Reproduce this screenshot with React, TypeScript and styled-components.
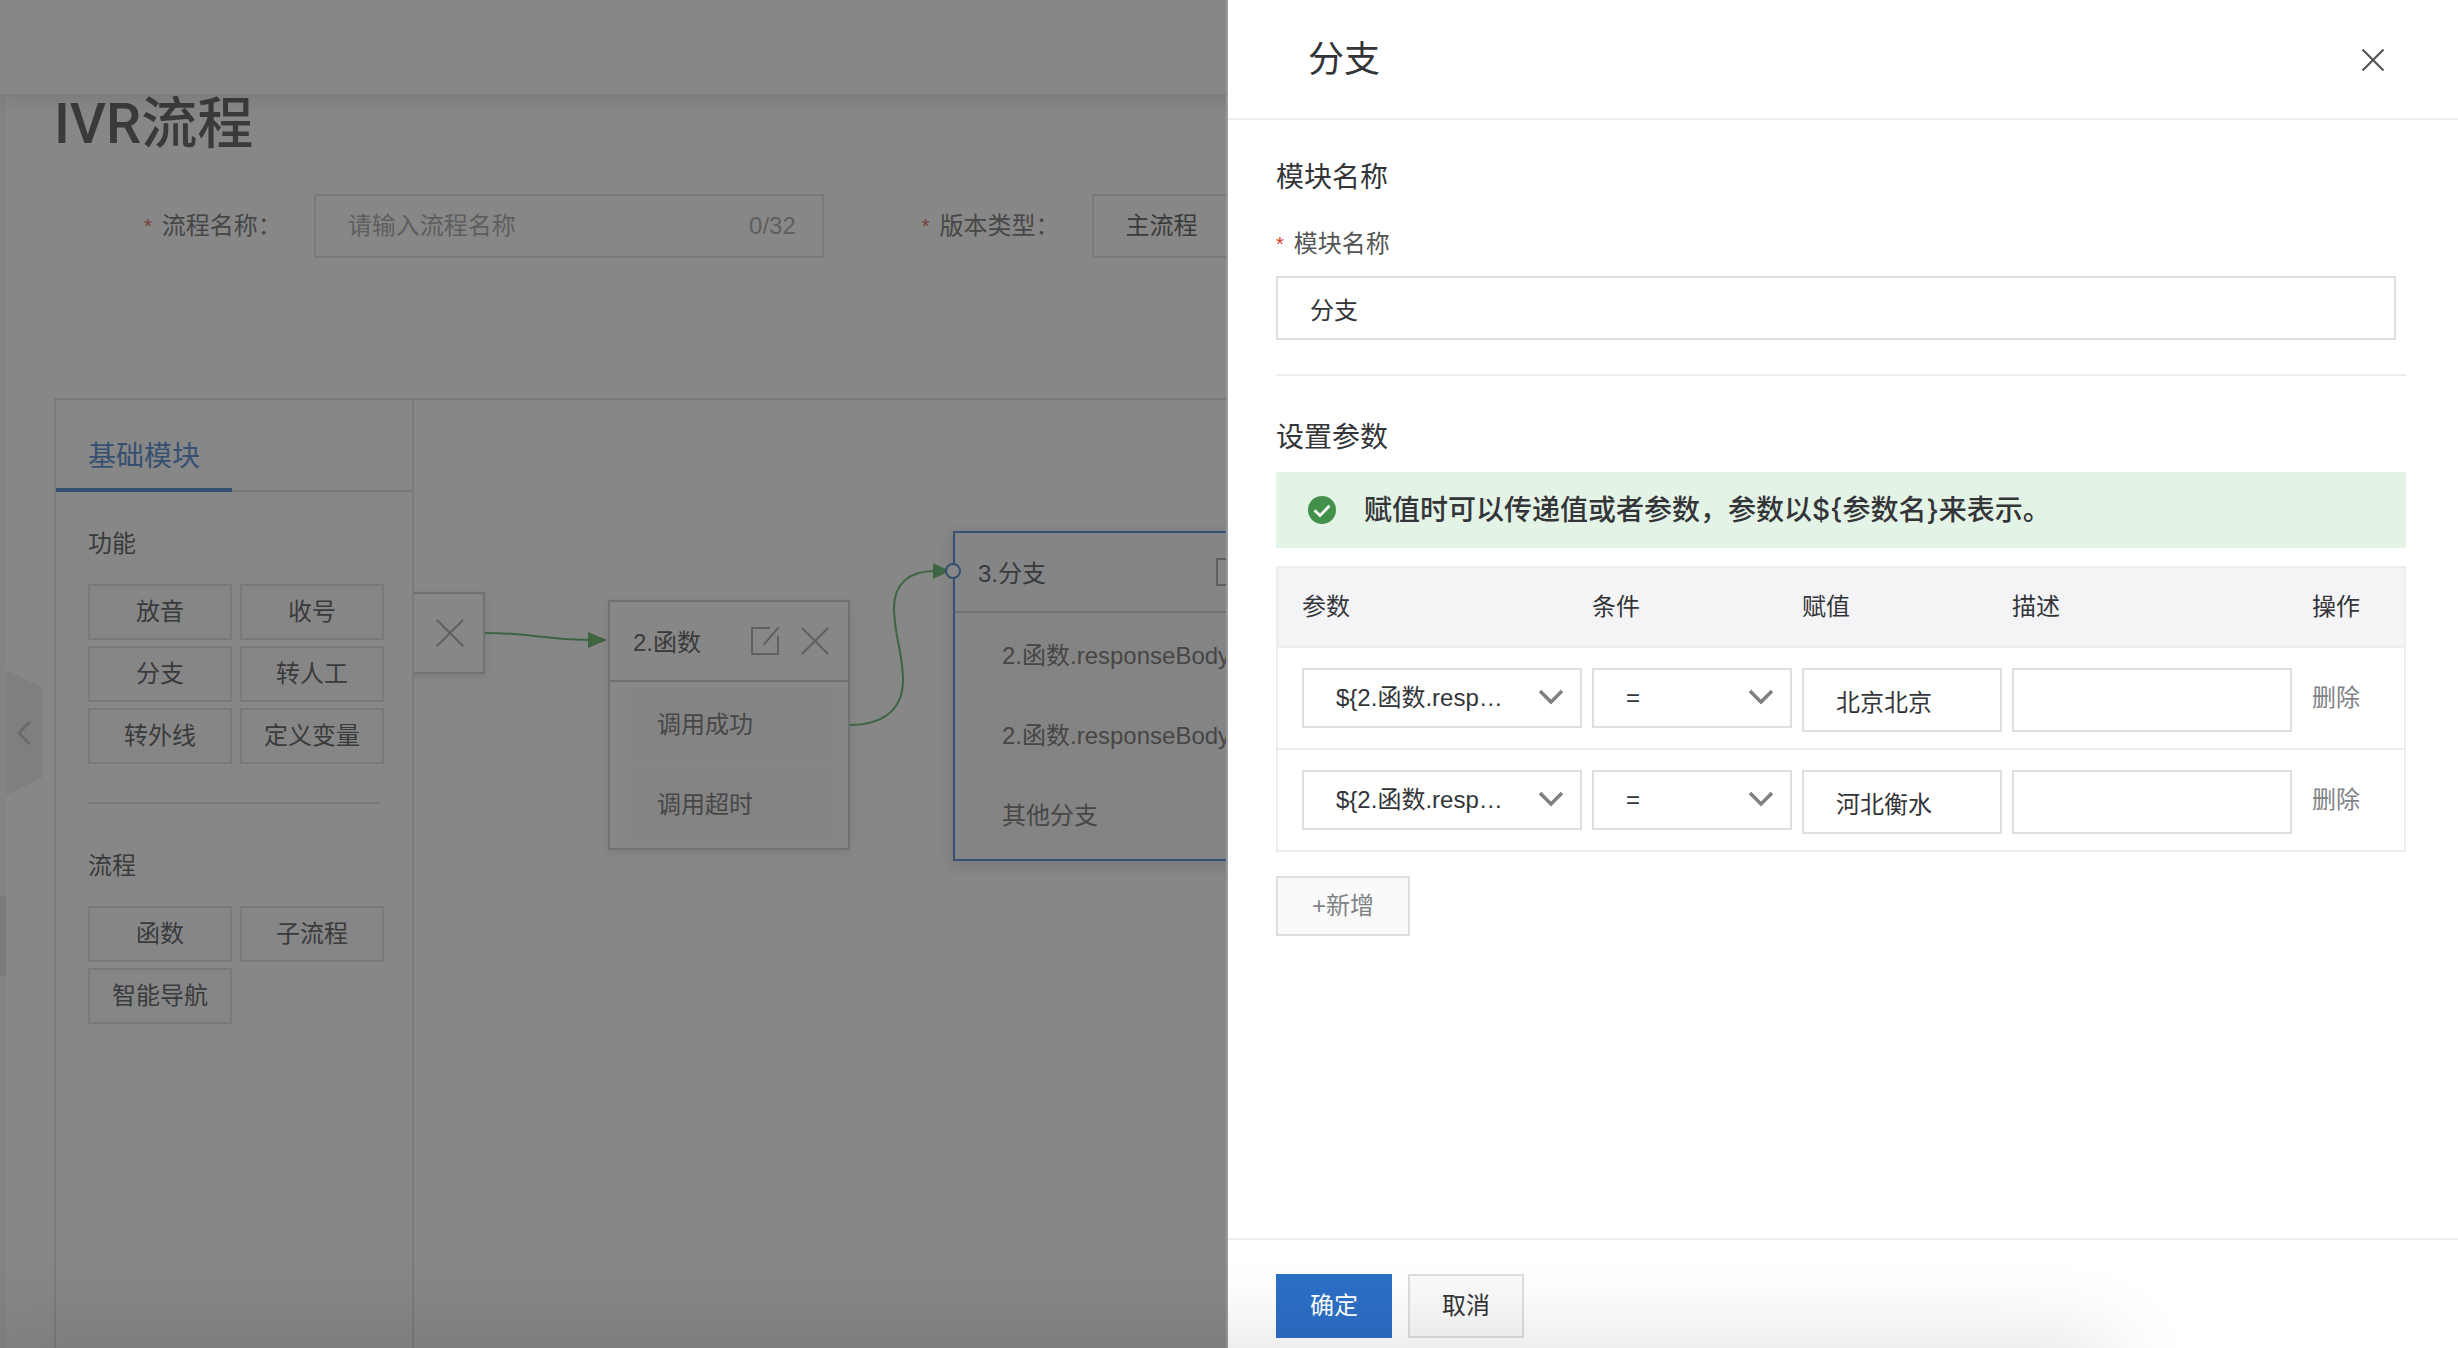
import React, { useState } from "react";
import styled, { createGlobalStyle, css } from "styled-components";

const color = {
  text: "#333538",
  body: "#555555",
  muted: "#808285",
  faint: "#949494",
  line: "#dedede",
  divider: "#ededed",
  blue: "#2c6fc7",
  red: "#d93a2b",
  green: "#3fa34a",
};

const GlobalStyle = createGlobalStyle`
  *, *::before, *::after { box-sizing: border-box; }
  body {
    margin: 0;
    background: #fff;
    overflow: hidden;
  }
  body, button, input, select {
    font-family: "Liberation Sans", "Noto Sans CJK SC", sans-serif;
    font-size: 24px;
    line-height: 32px;
    color: ${color.text};
  }
  h1, h2, h3, p { margin: 0; font-weight: 400; }
`;

/* ---------- shared controls ---------- */

const controlBox = css`
  border: 2px solid ${color.line};
  border-radius: 0;
  background: #fff;
  outline: none;
`;

const TextInput = styled.input`
  ${controlBox}
  display: block;
  width: 100%;
  height: 64px;
  padding: 0 32px;
`;

const SelectWrap = styled.div`
  position: relative;
`;

const SelectBox = styled.select<{ $height?: number }>`
  ${controlBox}
  appearance: none;
  display: block;
  width: 100%;
  height: ${(p) => p.$height ?? 60}px;
  padding: 0 32px;
`;

const SelectArrow = styled.svg`
  position: absolute;
  right: 18px;
  top: 50%;
  width: 26px;
  height: 16px;
  margin-top: -9px;
  pointer-events: none;
`;

const Button = styled.button<{ $primary?: boolean }>`
  height: 64px;
  padding: 0 32px;
  border: 2px solid ${(p) => (p.$primary ? color.blue : color.line)};
  background: ${(p) => (p.$primary ? color.blue : "#fafafa")};
  color: ${(p) => (p.$primary ? "#fff" : color.text)};
  cursor: pointer;
`;

const AddButton = styled(Button)`
  align-self: flex-start;
  height: 60px;
  margin-top: 24px;
  padding: 0 34px;
  color: ${color.muted};
`;

const IconButton = styled.button`
  display: flex;
  padding: 0;
  border: 0;
  background: none;
  cursor: pointer;
`;

const Label = styled.label`
  display: flex;
  gap: 10px;
  color: ${color.body};
  white-space: nowrap;
`;

const Star = styled.span`
  color: ${color.red};
  font-size: 20px;
`;

/* ---------- page behind the drawer ---------- */

const Page = styled.div`
  display: flex;
  flex-direction: column;
  height: 100vh;
  overflow: hidden;
`;

const TopBar = styled.header`
  position: relative;
  z-index: 1;
  flex: none;
  height: 96px;
  background: #fff;
  border-bottom: 2px solid #e2e2e2;
  box-shadow: 0 4px 20px rgba(0, 0, 0, 0.14);
`;

const Shell = styled.div`
  flex: 1;
  display: flex;
  min-height: 0;
`;

const Rail = styled.div`
  flex: none;
  width: 6px;
  padding-top: 800px;
  background: #f4f4f4;
`;

const RailThumb = styled.div`
  height: 80px;
  background: #dedede;
`;

const Gutter = styled.div`
  flex: none;
  width: 48px;
  padding-top: 574px;
`;

const Main = styled.main`
  flex: 1;
  display: flex;
  flex-direction: column;
  min-width: 0;
`;

const PageTitle = styled.h1`
  font-family: Roboto, "Noto Sans CJK SC", sans-serif;
  font-size: 56px;
  font-weight: 500;
  line-height: 56px;
`;

const FlowForm = styled.form`
  display: flex;
  align-items: center;
  margin: 42px 0 140px;
  padding-left: 90px;
`;

const Field = styled.div`
  flex: none;
  display: flex;
  align-items: center;
  gap: 32px;
  margin-right: 98px;
`;

const CountedInput = styled.div`
  ${controlBox}
  display: flex;
  align-items: center;
  width: 510px;
  height: 64px;
  padding: 0 26px 0 32px;
  color: ${color.faint};
`;

const BareInput = styled.input`
  flex: 1;
  min-width: 0;
  padding: 0;
  border: 0;
  outline: none;
  background: none;
  &::placeholder {
    color: ${color.faint};
    opacity: 1;
  }
`;

const VersionSelect = styled(SelectWrap)`
  width: 510px;
`;

const Workbench = styled.section`
  flex: 1;
  display: flex;
  min-height: 0;
  border: 2px solid ${color.line};
  border-right: 0;
  border-bottom: 0;
`;

const Palette = styled.aside`
  flex: none;
  width: 358px;
  border-right: 2px solid ${color.line};
`;

const TabBar = styled.div`
  display: flex;
  height: 92px;
  box-shadow: inset 0 -2px 0 #d6d6d6;
`;

const Tab = styled.button`
  padding: 26px 32px 0;
  border: 0;
  border-bottom: 4px solid ${color.blue};
  background: none;
  color: ${color.blue};
  font-size: 28px;
  cursor: pointer;
`;

const GroupRule = styled.hr`
  height: 2px;
  margin: 38px 32px 0;
  border: 0;
  background: #dcdcdc;
`;

const Group = styled.section`
  padding: 36px 28px 0 32px;
  ${GroupRule} + & {
    padding-top: 46px;
  }
`;

const GroupTitle = styled.h3`
  font-size: 24px;
  line-height: 32px;
`;

const Modules = styled.div`
  display: grid;
  grid-template-columns: 144px 144px;
  gap: 6px 8px;
  margin-top: 24px;
`;

const ModuleButton = styled.button`
  height: 56px;
  padding: 0;
  border: 2px solid ${color.line};
  background: #fcfcfc;
  cursor: pointer;
`;

/* ---------- flow canvas ---------- */

const Canvas = styled.div`
  position: relative;
  flex: 1;
  overflow: hidden;
`;

const Edges = styled.svg`
  position: absolute;
  inset: 0;
  width: 100%;
  height: 100%;
  pointer-events: none;
`;

const Node = styled.article<{ $x: number; $y: number; $w: number; $active?: boolean }>`
  position: absolute;
  left: ${(p) => p.$x}px;
  top: ${(p) => p.$y}px;
  width: ${(p) => p.$w}px;
  border: 2px solid ${(p) => (p.$active ? color.blue : "#c2c4cb")};
  background: ${(p) => (p.$active ? "#f7f9fe" : "#fff")};
  box-shadow: ${(p) => (p.$active ? "0 4px 12px 4px rgba(60, 80, 120, 0.16)" : "0 2px 8px rgba(60, 80, 120, 0.2)")};
`;

const NodeHead = styled.div<{ $plain?: boolean }>`
  display: flex;
  align-items: center;
  gap: 22px;
  height: ${(p) => (p.$plain ? 78 : 80)}px;
  padding: 0 19px 0 23px;
  border-bottom: ${(p) => (p.$plain ? "0" : "2px solid #c2c4c8")};
`;

const NodeTitle = styled.h3`
  flex: 1;
  padding-top: 4px;
  font-size: 24px;
  line-height: 32px;
  white-space: nowrap;
`;

const NodeBody = styled.div`
  display: flex;
  flex-direction: column;
  gap: 8px;
  padding: 7px 15px 7px 23px;
`;

const NodeItem = styled.div`
  height: 72px;
  padding: 20px 24px;
  background: #f6f6f6;
  color: ${color.body};
  white-space: nowrap;
`;

const Port = styled.span`
  position: absolute;
  left: -10px;
  top: 32px;
  width: 16px;
  height: 16px;
  border: 2px solid ${color.blue};
  border-radius: 50%;
  background: #fff;
`;

/* ---------- drawer ---------- */

const Mask = styled.div`
  position: fixed;
  inset: 0;
  z-index: 2;
  background: rgba(62, 62, 62, 0.62);
`;

const Drawer = styled.aside`
  position: fixed;
  top: 0;
  right: 0;
  bottom: 0;
  z-index: 3;
  display: flex;
  flex-direction: column;
  width: calc(50% + 3px);
  background: #fff;
  border-left: 2px solid #999;
`;

const DrawerHead = styled.header`
  flex: none;
  display: flex;
  align-items: center;
  justify-content: space-between;
  height: 120px;
  padding: 2px 74px 0 80px;
  border-bottom: 2px solid ${color.divider};
`;

const DrawerTitle = styled.h2`
  font-size: 36px;
  line-height: 48px;
`;

const DrawerBody = styled.div`
  flex: 1;
  display: flex;
  flex-direction: column;
  min-height: 0;
  padding: 38px 52px 0 48px;
`;

const SectionTitle = styled.h3`
  font-size: 28px;
  line-height: 40px;
`;

const NameField = styled.div`
  display: flex;
  flex-direction: column;
  gap: 16px;
  margin: 30px 0 34px;
  padding-right: 10px;
`;

const SettingsSection = styled.section`
  display: flex;
  flex-direction: column;
  padding-top: 42px;
  border-top: 2px solid ${color.divider};
`;

const Notice = styled.div`
  display: flex;
  align-items: center;
  gap: 28px;
  height: 76px;
  margin: 14px 0 18px;
  padding: 0 32px;
  background: #e3f3e5;
`;

const NoticeText = styled.p`
  font-family: Inter, "Noto Sans CJK SC", sans-serif;
  font-size: 28px;
  font-weight: 500;
  line-height: 40px;
`;

const ParamTable = styled.table`
  width: 100%;
  table-layout: fixed;
  border-spacing: 0;
  border: 2px solid ${color.divider};
  border-bottom: 0;
`;

const Col = styled.col<{ $w?: number }>`
  width: ${(p) => (p.$w ? `${p.$w}px` : "auto")};
`;

const cell = css`
  border-bottom: 2px solid ${color.divider};
  text-align: left;
  font-weight: 400;
  &:first-child { padding-left: 24px; }
  &:last-child { padding-left: 20px; }
`;

const Th = styled.th`
  height: 80px;
  padding: 0 0 0 10px;
  background: #f4f4f7;
  ${cell}
`;

const Td = styled.td`
  height: 102px;
  padding: 20px 0 0 10px;
  vertical-align: top;
  ${cell}
`;

const RemoveButton = styled(IconButton)`
  height: 60px;
  align-items: center;
  color: ${color.muted};
`;

const DrawerFoot = styled.footer`
  flex: none;
  display: flex;
  gap: 16px;
  padding: 34px 48px 10px;
  border-top: 2px solid ${color.divider};
`;

const BottomShade = styled.div`
  position: fixed;
  left: 0;
  bottom: -40px;
  z-index: 4;
  width: 85%;
  height: 20px;
  box-shadow: 0 0 90px 20px rgba(0, 0, 0, 0.16);
  pointer-events: none;
`;

/* ---------- icons ---------- */

const CrossIcon = ({ size, stroke }: { size: number; stroke: string }) => (
  <svg width={size} height={size} viewBox="0 0 28 28" fill="none" stroke={stroke} strokeWidth={size > 24 ? 2 : 2.8}>
    <path d="M0.7 0.7 27.3 27.3M27.3 0.7 0.7 27.3" />
  </svg>
);

const EditIcon = () => (
  <svg width="28" height="28" viewBox="0 0 28 28" fill="none" stroke="#999" strokeWidth="2">
    <path d="M19 1H1v26h26V8.5M27.500 0.500 12.500 18" />
  </svg>
);

const CheckIcon = () => (
  <svg width="28" height="28" viewBox="0 0 28 28">
    <circle cx="14" cy="14" r="14" fill="#43904a" />
    <path d="M6.5 14.2 12 19.600 21.500 9.800" fill="none" stroke="#fff" strokeWidth="2.8" />
  </svg>
);

const Arrow = () => (
  <SelectArrow viewBox="0 0 26 16" fill="none" stroke="#808080" strokeWidth="3.5">
    <path d="M2 2 13 13 24 2" />
  </SelectArrow>
);

const CollapseTab = () => (
  <IconButton type="button" aria-label="收起">
    <svg width="36" height="126" viewBox="0 0 36 126">
      <path d="M0 0 36 17V108L0 125Z" fill="#e9e9e9" />
      <path d="M23.500 52 13 63 23.500 74" fill="none" stroke="#b5b5b5" strokeWidth="3" />
    </svg>
  </IconButton>
);

/* ---------- data ---------- */

const groups = [
  { title: "功能", items: ["放音", "收号", "分支", "转人工", "转外线", "定义变量"] },
  { title: "流程", items: ["函数", "子流程", "智能导航"] },
];

const flowNodes = [
  { x: 194, y: 200, w: 242, title: "2.函数", items: ["调用成功", "调用超时"] },
  {
    x: 539,
    y: 131,
    w: 362,
    title: "3.分支",
    items: ["2.函数.responseBody", "2.函数.responseBody", "其他分支"],
    active: true,
  },
];

const columns = ["参数", "条件", "赋值", "描述", "操作"];

const initialRows = [
  { id: 1, param: "${2.函数.resp…", value: "北京北京" },
  { id: 2, param: "${2.函数.resp…", value: "河北衡水" },
];

type FlowNodeProps = { x: number; y: number; w: number; title: string; items: string[]; active?: boolean };

const FlowNode = ({ x, y, w, title, items, active }: FlowNodeProps) => (
  <Node $x={x} $y={y} $w={w} $active={active}>
    <NodeHead>
      <NodeTitle>{title}</NodeTitle>
      <IconButton type="button" aria-label="编辑"><EditIcon /></IconButton>
      <IconButton type="button" aria-label="删除"><CrossIcon size={28} stroke="#999" /></IconButton>
    </NodeHead>
    <NodeBody>
      {items.map((item, i) => <NodeItem key={i}>{item}</NodeItem>)}
    </NodeBody>
  </Node>
);

export default function App() {
  const [rows, setRows] = useState(initialRows);
  const [name, setName] = useState("分支");

  const setValue = (id: number, value: string) =>
    setRows(rows.map((r) => (r.id === id ? { ...r, value } : r)));

  return (
    <>
      <GlobalStyle />
      <Page>
        <TopBar />
        <Shell>
          <Rail><RailThumb /></Rail>
          <Gutter><CollapseTab /></Gutter>
          <Main>
            <PageTitle>IVR流程</PageTitle>
            <FlowForm>
              <Field>
                <Label htmlFor="flow-name"><Star>*</Star>流程名称：</Label>
                <CountedInput>
                  <BareInput id="flow-name" placeholder="请输入流程名称" />
                  <span>0/32</span>
                </CountedInput>
              </Field>
              <Field>
                <Label htmlFor="flow-type"><Star>*</Star>版本类型：</Label>
                <VersionSelect>
                  <SelectBox id="flow-type" $height={64}><option>主流程</option></SelectBox>
                </VersionSelect>
              </Field>
            </FlowForm>
            <Workbench>
              <Palette>
                <TabBar><Tab type="button">基础模块</Tab></TabBar>
                {groups.map((g, i) => (
                  <React.Fragment key={g.title}>
                    {i > 0 && <GroupRule />}
                    <Group>
                      <GroupTitle>{g.title}</GroupTitle>
                      <Modules>
                        {g.items.map((m) => <ModuleButton key={m} type="button">{m}</ModuleButton>)}
                      </Modules>
                    </Group>
                  </React.Fragment>
                ))}
              </Palette>
              <Canvas>
                <Node $x={-171} $y={192} $w={242}>
                  <NodeHead $plain>
                    <NodeTitle />
                    <IconButton type="button" aria-label="删除"><CrossIcon size={28} stroke="#999" /></IconButton>
                  </NodeHead>
                </Node>
                {flowNodes.map((n) => <FlowNode key={n.title} {...n} />)}
                <Edges fill="none" stroke={color.green} strokeWidth="2">
                  <path d="M71 233C126 233 124 240 176 240" />
                  <path d="M193 240 174 232V248Z" fill={color.green} stroke="none" />
                  <path d="M436 325C466 325 489 312 489 280C489 252 480 236 480 208C480 185 494 171 520 171" />
                  <path d="M536 171 519 163V179Z" fill={color.green} stroke="none" />
                  <circle cx="539" cy="171" r="7" fill="#fff" stroke={color.blue} />
                </Edges>
              </Canvas>
            </Workbench>
          </Main>
        </Shell>
      </Page>

      <Mask />
      <Drawer role="dialog" aria-labelledby="drawer-title">
        <DrawerHead>
          <DrawerTitle id="drawer-title">分支</DrawerTitle>
          <IconButton type="button" aria-label="关闭"><CrossIcon size={22} stroke="#555" /></IconButton>
        </DrawerHead>
        <DrawerBody>
          <SectionTitle>模块名称</SectionTitle>
          <NameField>
            <Label htmlFor="module-name"><Star>*</Star>模块名称</Label>
            <TextInput id="module-name" value={name} onChange={(e) => setName(e.target.value)} />
          </NameField>
          <SettingsSection>
            <SectionTitle>设置参数</SectionTitle>
            <Notice>
              <CheckIcon />
              <NoticeText>{"赋值时可以传递值或者参数，参数以${参数名}来表示。"}</NoticeText>
            </Notice>
            <ParamTable>
              <colgroup>
                <Col $w={304} />
                <Col $w={210} />
                <Col $w={210} />
                <Col />
                <Col $w={112} />
              </colgroup>
              <thead>
                <tr>{columns.map((c) => <Th key={c} scope="col">{c}</Th>)}</tr>
              </thead>
              <tbody>
                {rows.map((r) => (
                  <tr key={r.id}>
                    <Td>
                      <SelectWrap>
                        <SelectBox aria-label="参数"><option>{r.param}</option></SelectBox>
                        <Arrow />
                      </SelectWrap>
                    </Td>
                    <Td>
                      <SelectWrap>
                        <SelectBox aria-label="条件"><option>=</option></SelectBox>
                        <Arrow />
                      </SelectWrap>
                    </Td>
                    <Td>
                      <TextInput
                        aria-label="赋值"
                        value={r.value}
                        onChange={(e) => setValue(r.id, e.target.value)}
                      />
                    </Td>
                    <Td><TextInput aria-label="描述" /></Td>
                    <Td>
                      <RemoveButton type="button" onClick={() => setRows(rows.filter((x) => x.id !== r.id))}>
                        删除
                      </RemoveButton>
                    </Td>
                  </tr>
                ))}
              </tbody>
            </ParamTable>
            <AddButton
              type="button"
              onClick={() => setRows([...rows, { id: Date.now(), param: "", value: "" }])}
            >
              +新增
            </AddButton>
          </SettingsSection>
        </DrawerBody>
        <DrawerFoot>
          <Button type="button" $primary>确定</Button>
          <Button type="button">取消</Button>
        </DrawerFoot>
      </Drawer>
      <BottomShade />
    </>
  );
}
